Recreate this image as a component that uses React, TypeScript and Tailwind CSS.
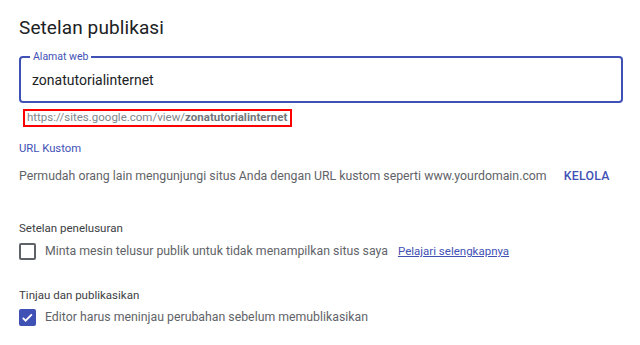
import React from 'react';

const blue = 'text-[#3f51b5]';

function Checkbox({ checked }: { checked: boolean }) {
    if (checked) {
        return (
            <div className="flex h-[17px] w-[17px] shrink-0 items-center justify-center rounded-[2px] bg-[#3f51b5]">
                <svg viewBox="0 0 24 24" className="h-[15px] w-[15px]">
                    <path d="M4.5 12.5l4.5 4.5 10-10" fill="none" stroke="white" strokeWidth="3" />
                </svg>
            </div>
        );
    }
    return <div className="h-[17px] w-[17px] shrink-0 rounded-[2px] border-2 border-[#5f6368]" />;
}

export default function App() {
    return (
        <div className="min-h-[345px] w-[640px] bg-white pl-[19px] pr-[17px] pt-[14px] font-['Roboto','Liberation_Sans',sans-serif]">
            <h1 className="text-[19px] leading-[28px] tracking-[0.1px] text-[#202124]">Setelan publikasi</h1>

            {/* alamat web */}
            <div className="relative mt-[14px] flex h-[47px] items-center rounded-[4px] border-2 border-[#3f51b5] px-[11px]">
                <span className="absolute left-[9px] top-[-8px] bg-white px-[3px] text-[10.5px] leading-[13px] text-[#3f51b5]">
                    Alamat web
                </span>
                <span className="pt-[2px] text-[14px] text-[#202124]">zonatutorialinternet</span>
            </div>

            <div className="ml-[4px] mt-[6px] inline-flex h-[18px] items-center border-2 border-[#ff0000] pl-[2px] pr-[3px] text-[11.5px] text-[#80868b]">
                https://sites.google.com/view/<span className="font-bold text-[#70757a]">zonatutorialinternet</span>
            </div>

            <div className={`mt-[13px] text-[11.3px] leading-[16px] ${blue}`}>URL Kustom</div>

            <div className="mt-[11px] flex items-center text-[12.3px] leading-[16px]">
                <span className="text-[#5f6368]">
                    Permudah orang lain mengunjungi situs Anda dengan URL kustom seperti www.yourdomain.com
                </span>
                <span className={`ml-[17px] font-medium tracking-[0.3px] ${blue}`}>KELOLA</span>
            </div>

            <div className="mt-[36px] text-[11.5px] leading-[16px] text-[#3c4043]">Setelan penelusuran</div>
            <div className="mt-[6px] flex items-center">
                <Checkbox checked={false} />
                <span className="ml-[9px] text-[12.3px] text-[#5f6368]">
                    Minta mesin telusur publik untuk tidak menampilkan situs saya
                </span>
                <span className={`ml-[10px] text-[11.5px] underline ${blue}`}>Pelajari selengkapnya</span>
            </div>

            <div className="mt-[26px] text-[11.5px] leading-[16px] text-[#3c4043]">Tinjau dan publikasikan</div>
            <div className="mt-[5px] flex items-center">
                <Checkbox checked />
                <span className="ml-[9px] text-[12.3px] text-[#5f6368]">
                    Editor harus meninjau perubahan sebelum memublikasikan
                </span>
            </div>
        </div>
    );
}
